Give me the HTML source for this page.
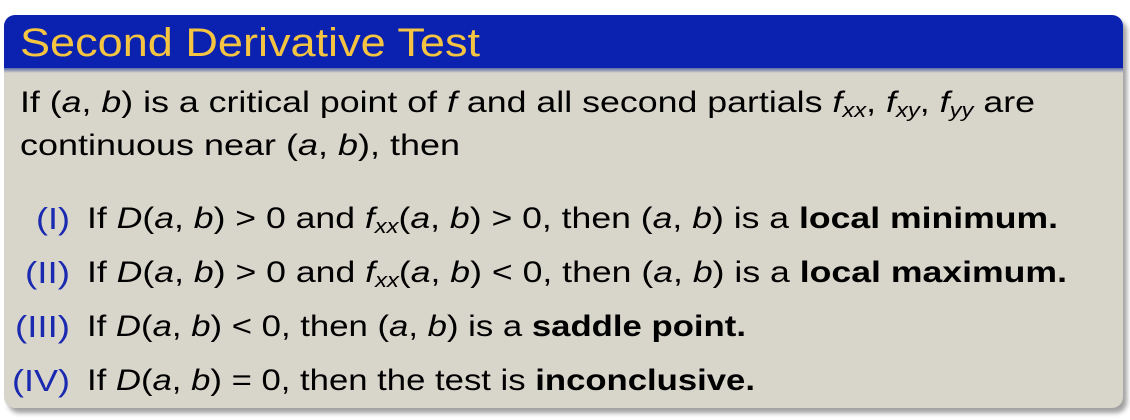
<!DOCTYPE html>
<html><head><meta charset="utf-8"><style>
html,body{margin:0;padding:0;background:#fff;width:1130px;height:420px;overflow:hidden}
</style></head><body>
<svg width="1130" height="420" xmlns="http://www.w3.org/2000/svg" style="position:absolute;left:0;top:0">
<defs>
<filter id="sh" x="-5%" y="-5%" width="110%" height="115%"><feGaussianBlur stdDeviation="2.5"/></filter>
<linearGradient id="sg" x1="0" y1="0" x2="0" y2="1"><stop offset="0" stop-color="#5a6aa8"/><stop offset="1" stop-color="#d8d5cb"/></linearGradient>
<clipPath id="c"><rect x="4" y="15" width="1119" height="393" rx="11"/></clipPath>
</defs>
<rect x="8" y="20" width="1119" height="393" rx="11" fill="#555" opacity="0.55" filter="url(#sh)"/>
<g clip-path="url(#c)">
<rect x="4" y="15" width="1119" height="393" fill="#d8d5cb"/>
<rect x="4" y="15" width="1119" height="53" fill="#0b22b0"/>
<rect x="4" y="68" width="1119" height="5" fill="url(#sg)"/>
</g>
<g font-family="Liberation Sans, DejaVu Sans, sans-serif" fill="#000">
<text x="20" y="56" font-size="40" fill="#f5c542" textLength="460" lengthAdjust="spacingAndGlyphs">Second Derivative Test</text>
<text x="20" y="112" font-size="30" textLength="1015" lengthAdjust="spacingAndGlyphs">If (<tspan font-style="italic">a</tspan>, <tspan font-style="italic">b</tspan>) is a critical point of <tspan font-style="italic">f</tspan> and all second partials <tspan font-style="italic">f</tspan><tspan font-style="italic" font-size="20" dy="5">xx</tspan><tspan dy="-5">, </tspan><tspan font-style="italic">f</tspan><tspan font-style="italic" font-size="20" dy="5">xy</tspan><tspan dy="-5">, </tspan><tspan font-style="italic">f</tspan><tspan font-style="italic" font-size="20" dy="5">yy</tspan><tspan dy="-5"> are</tspan></text>
<text x="20" y="155" font-size="30" textLength="440" lengthAdjust="spacingAndGlyphs">continuous near (<tspan font-style="italic">a</tspan>, <tspan font-style="italic">b</tspan>), then</text>
<g font-size="31" fill="#1a2ab0">
<text x="36" y="229" textLength="34" lengthAdjust="spacingAndGlyphs">(I)</text>
<text x="25" y="283" textLength="45" lengthAdjust="spacingAndGlyphs">(II)</text>
<text x="15" y="337" textLength="55" lengthAdjust="spacingAndGlyphs">(III)</text>
<text x="12" y="391" textLength="58" lengthAdjust="spacingAndGlyphs">(IV)</text>
</g>
<text x="87" y="228" font-size="30" textLength="971" lengthAdjust="spacingAndGlyphs">If <tspan font-style="italic">D</tspan>(<tspan font-style="italic">a</tspan>, <tspan font-style="italic">b</tspan>) &gt; 0 and <tspan font-style="italic">f</tspan><tspan font-style="italic" font-size="20" dy="5">xx</tspan><tspan dy="-5">(</tspan><tspan font-style="italic">a</tspan>, <tspan font-style="italic">b</tspan>) &gt; 0, then (<tspan font-style="italic">a</tspan>, <tspan font-style="italic">b</tspan>) is a <tspan font-weight="bold">local minimum.</tspan></text>
<text x="87" y="282" font-size="30" textLength="980" lengthAdjust="spacingAndGlyphs">If <tspan font-style="italic">D</tspan>(<tspan font-style="italic">a</tspan>, <tspan font-style="italic">b</tspan>) &gt; 0 and <tspan font-style="italic">f</tspan><tspan font-style="italic" font-size="20" dy="5">xx</tspan><tspan dy="-5">(</tspan><tspan font-style="italic">a</tspan>, <tspan font-style="italic">b</tspan>) &lt; 0, then (<tspan font-style="italic">a</tspan>, <tspan font-style="italic">b</tspan>) is a <tspan font-weight="bold">local maximum.</tspan></text>
<text x="87" y="336" font-size="30" textLength="659" lengthAdjust="spacingAndGlyphs">If <tspan font-style="italic">D</tspan>(<tspan font-style="italic">a</tspan>, <tspan font-style="italic">b</tspan>) &lt; 0, then (<tspan font-style="italic">a</tspan>, <tspan font-style="italic">b</tspan>) is a <tspan font-weight="bold">saddle point.</tspan></text>
<text x="87" y="390" font-size="30" textLength="668" lengthAdjust="spacingAndGlyphs">If <tspan font-style="italic">D</tspan>(<tspan font-style="italic">a</tspan>, <tspan font-style="italic">b</tspan>) = 0, then the test is <tspan font-weight="bold">inconclusive.</tspan></text>
</g>
</svg>
</body></html>
